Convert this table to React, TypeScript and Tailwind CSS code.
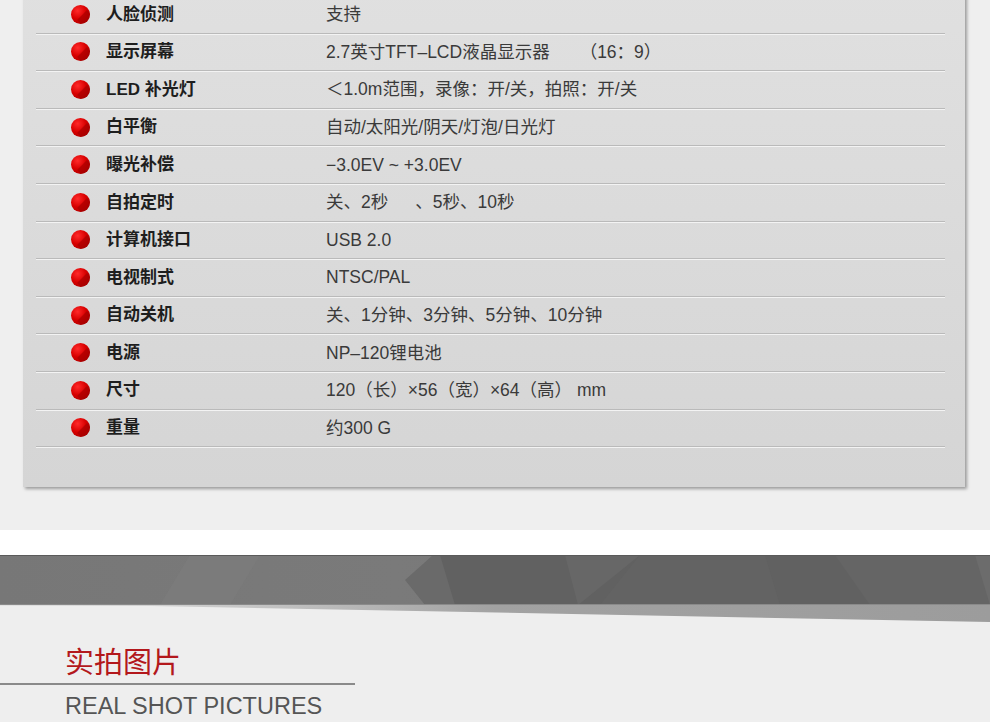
import type { ReactNode } from "react";

const FONT = "font-['Liberation_Sans','Noto_Sans_CJK_SC',sans-serif]";

const SPECS: { label: string; value: ReactNode }[] = [
  { label: "人脸侦测", value: "支持" },
  {
    label: "显示屏幕",
    value: (
      <>
        2.7英寸TFT–LCD液晶显示器
        <span className="inline-block w-[30px]" />
        （16：9）
      </>
    ),
  },
  { label: "LED 补光灯", value: "＜1.0m范围，录像：开/关，拍照：开/关" },
  { label: "白平衡", value: "自动/太阳光/阴天/灯泡/日光灯" },
  { label: "曝光补偿", value: "−3.0EV ~ +3.0EV" },
  {
    label: "自拍定时",
    value: (
      <>
        关、2秒
        <span className="inline-block w-[27px]" />
        、5秒、10秒
      </>
    ),
  },
  { label: "计算机接口", value: "USB 2.0" },
  { label: "电视制式", value: "NTSC/PAL" },
  { label: "自动关机", value: "关、1分钟、3分钟、5分钟、10分钟" },
  { label: "电源", value: "NP–120锂电池" },
  { label: "尺寸", value: "120（长）×56（宽）×64（高） mm" },
  { label: "重量", value: "约300 G" },
];

function Bullet() {
  return (
    <span className="relative block h-[19px] w-[19px] shrink-0 overflow-hidden rounded-full bg-[radial-gradient(circle_at_35%_30%,#ff2a2a_0%,#d80000_45%,#9c0000_100%)]">
      <span className="absolute left-[9px] top-[8px] h-[14px] w-[14px] rotate-45 bg-[#a00000]/60" />
    </span>
  );
}

function SpecRow({ label, value }: { label: string; value: ReactNode }) {
  return (
    <li className="flex h-[37.6px] items-center border-b border-[#bababa] shadow-[0_1px_0_#f3f3f3]">
      <span className="ml-[35px]">
        <Bullet />
      </span>
      <span className="ml-[16px] w-[220px] text-[17px] font-bold text-[#1e1e1e]">{label}</span>
      <span className="whitespace-pre text-[17.5px] text-[#3a3a3a]">{value}</span>
    </li>
  );
}

function Banner() {
  return (
    <div className="bg-white pt-[25px]">
      <div className="relative h-[50px] bg-[#767676]">
        <svg className="absolute inset-0 h-full w-full" viewBox="0 0 990 50" preserveAspectRatio="none">
          <defs>
            <linearGradient id="bl" x1="0" x2="1" y1="0" y2="0">
              <stop offset="0" stopColor="#777777" />
              <stop offset="0.4" stopColor="#7a7a7a" />
              <stop offset="1" stopColor="#727272" />
            </linearGradient>
          </defs>
          <rect x="0" y="0" width="990" height="50" fill="url(#bl)" />
          <polygon points="190,0 260,0 230,50 160,50" fill="#7b7b7b" />
          <polygon points="433,0 405,25 425,50 990,50 990,0" fill="#6a6a6a" />
          <polygon points="440,0 455,50 990,50 990,0" fill="#616161" />
          <polygon points="565,0 640,0 578,50" fill="#676767" />
          <polygon points="640,0 765,0 780,50 600,50" fill="#636363" />
          <polygon points="835,0 870,50 990,50 990,0" fill="#656565" />
          <polygon points="975,0 990,0 990,50" fill="#6c6c6c" />
          <rect x="0" y="0" width="990" height="1" fill="#5a5a5a" />
          <rect x="0" y="49" width="990" height="1" fill="#8a8a8a" />
        </svg>
      </div>
      <svg className="block h-[17px] w-[990px] bg-[#eeeeee]" viewBox="0 0 990 17" preserveAspectRatio="none">
        <defs>
          <linearGradient id="wg" x1="0" x2="1" y1="0" y2="0">
            <stop offset="0" stopColor="#e2e2e2" />
            <stop offset="0.25" stopColor="#c6c6c6" />
            <stop offset="0.5" stopColor="#a2a2a2" />
            <stop offset="1" stopColor="#9c9c9c" />
          </linearGradient>
        </defs>
        <polygon points="0,0 990,0 990,17 150,1 0,1" fill="url(#wg)" />
      </svg>
    </div>
  );
}

export default function App() {
  return (
    <div className={`h-[722px] w-[990px] overflow-hidden bg-[#efefef] ${FONT}`}>
      <div className="-mt-[16px] ml-[23px] w-[942px] bg-gradient-to-b from-[#e0e0e0] to-[#d5d5d5] pb-[40px] pt-[12px] shadow-[2px_2px_3px_rgba(0,0,0,0.35)]">
        <ul className="ml-[13px] mr-[20px]">
          {SPECS.map((s) => (
            <SpecRow key={s.label} label={s.label} value={s.value} />
          ))}
        </ul>
      </div>

      <div className="mt-[43px]">
        <Banner />
      </div>

      <section className="bg-[#eeeeee] pt-[23px]">
        <h2 className="pl-[65px] text-[29px] leading-[36px] text-[#b3181c]">实拍图片</h2>
        <div className="mt-[2px] h-[1.5px] w-[355px] bg-[#8a8a8a]" />
        <p className="mt-[7px] pl-[65px] text-[23.5px] leading-[28px] text-[#555555]">REAL SHOT PICTURES</p>
      </section>
    </div>
  );
}
